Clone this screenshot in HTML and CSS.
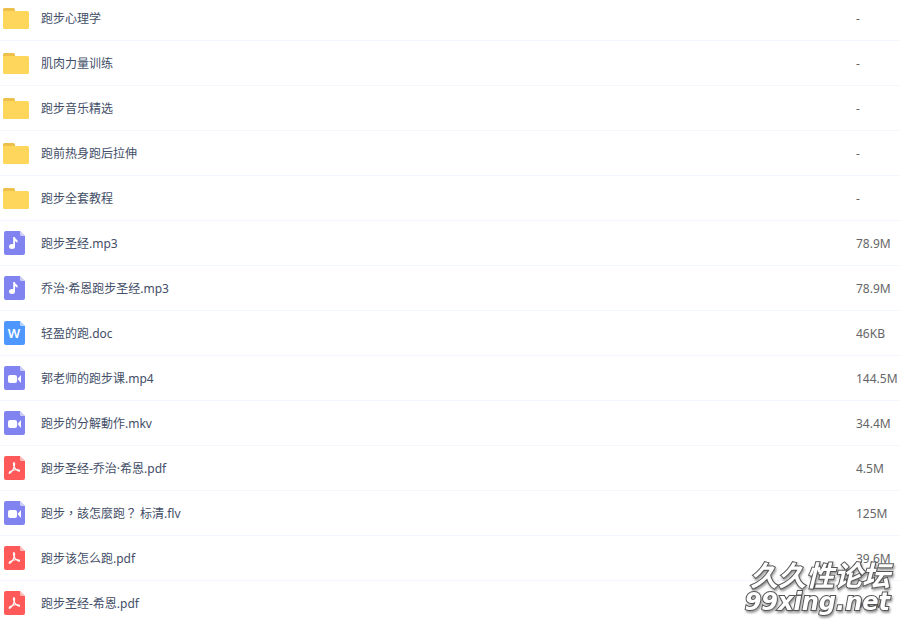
FILE: index.html
```html
<!DOCTYPE html>
<html lang="zh-CN">

<head>
    <meta charset="utf-8">
    <title>跑步</title>
    <link rel="stylesheet" href="styles.css">
</head>

<body>
    <svg class="sprite" aria-hidden="true">
        <symbol id="folder" viewBox="0 0 26 24">
            <path fill="#edbf4b" d="M0 10V3.500Q0 2 1.500 2H10.500Q12 2 12 3.500V10Z" />
            <path fill="#ffd65c" d="M0 5H24.500Q26 5 26 6.500V21.500Q26 23 24.500 23H1.500Q0 23 0 21.500Z" />
        </symbol>
        <symbol id="page" viewBox="0 0 26 24">
            <path fill="currentColor" d="M3 0H17L22 5V22Q22 24 20 24H3Q1 24 1 22V2Q1 0 3 0Z" />
            <path fill="#fff" fill-opacity=".6" d="M17 0L22 5H18.500Q17 5 17 3.500Z" />
        </symbol>
        <symbol id="audio" viewBox="0 0 26 24">
            <use href="#page" />
            <ellipse cx="9" cy="15.500" rx="3" ry="2.500" fill="#fff" />
            <path fill="#fff" d="M10.200 6H11.800Q12 8 14.500 9.200V11.800Q13 11 12 10V16H10.200Z" />
        </symbol>
        <symbol id="video" viewBox="0 0 26 24">
            <use href="#page" />
            <rect x="5" y="9" width="9" height="8" rx="2" fill="#fff" />
            <path fill="#fff" d="M14.500 13L18 9V17Z" />
        </symbol>
        <symbol id="word" viewBox="0 0 26 24">
            <use href="#page" />
            <text class="letter" x="11" y="17" text-anchor="middle">W</text>
        </symbol>
        <symbol id="pdf" viewBox="0 0 26 24">
            <use href="#page" />
            <path fill="none" stroke="#fff" stroke-width="1.100" stroke-linejoin="round" stroke-linecap="round"
                d="M10.500 6.800C12 6.200 11.800 8.500 11.200 10.700C10.200 14 7.500 18 6.300 17.300C5.300 16.300 9 14.200 12.500 13.700C15.500 13.400 17.200 14.500 16.400 15.200C15 15.800 11.800 12.800 11 10.500C10.300 8.500 10 7.500 10.500 6.800" />
        </symbol>
    </svg>

    <table class="file-list">
        <tr>
            <td class="name"><a href="#"><svg class="icon"><use href="#folder" /></svg>跑步心理学</a></td>
            <td class="size">-</td>
        </tr>
        <tr>
            <td class="name"><a href="#"><svg class="icon"><use href="#folder" /></svg>肌肉力量训练</a></td>
            <td class="size">-</td>
        </tr>
        <tr>
            <td class="name"><a href="#"><svg class="icon"><use href="#folder" /></svg>跑步音乐精选</a></td>
            <td class="size">-</td>
        </tr>
        <tr>
            <td class="name"><a href="#"><svg class="icon"><use href="#folder" /></svg>跑前热身跑后拉伸</a></td>
            <td class="size">-</td>
        </tr>
        <tr>
            <td class="name"><a href="#"><svg class="icon"><use href="#folder" /></svg>跑步全套教程</a></td>
            <td class="size">-</td>
        </tr>
        <tr>
            <td class="name"><a href="#"><svg class="icon media"><use href="#audio" /></svg>跑步圣经.mp3</a></td>
            <td class="size">78.9M</td>
        </tr>
        <tr>
            <td class="name"><a href="#"><svg class="icon media"><use href="#audio" /></svg>乔治·希恩跑步圣经.mp3</a></td>
            <td class="size">78.9M</td>
        </tr>
        <tr>
            <td class="name"><a href="#"><svg class="icon doc"><use href="#word" /></svg>轻盈的跑.doc</a></td>
            <td class="size">46KB</td>
        </tr>
        <tr>
            <td class="name"><a href="#"><svg class="icon media"><use href="#video" /></svg>郭老师的跑步课.mp4</a></td>
            <td class="size">144.5M</td>
        </tr>
        <tr>
            <td class="name"><a href="#"><svg class="icon media"><use href="#video" /></svg>跑步的分解動作.mkv</a></td>
            <td class="size">34.4M</td>
        </tr>
        <tr>
            <td class="name"><a href="#"><svg class="icon pdf"><use href="#pdf" /></svg>跑步圣经-乔治·希恩.pdf</a></td>
            <td class="size">4.5M</td>
        </tr>
        <tr>
            <td class="name trad" lang="zh-TW"><a href="#"><svg class="icon media"><use href="#video" /></svg>跑步，該怎麼跑？ 标清.flv</a></td>
            <td class="size">125M</td>
        </tr>
        <tr>
            <td class="name"><a href="#"><svg class="icon pdf"><use href="#pdf" /></svg>跑步该怎么跑.pdf</a></td>
            <td class="size">39.6M</td>
        </tr>
        <tr>
            <td class="name"><a href="#"><svg class="icon pdf"><use href="#pdf" /></svg>跑步圣经-希恩.pdf</a></td>
            <td class="size">5.2M</td>
        </tr>
    </table>

    <div class="watermark">
        <span class="cn">久久性论坛</span>
        <span class="en">99xing.net</span>
    </div>
</body>

</html>
```
FILE: styles.css
```css
html {
    overflow: hidden;
}

body {
    margin: 0;
    background: #fff;
    font-family: "Noto Sans", "Noto Sans CJK SC", sans-serif;
    font-size: 12px;
    line-height: 20px;
    color: #424e67;
}

.sprite {
    position: absolute;
    width: 0;
    height: 0;
}

/* 列表向上滚动了一点，首行被裁掉 4px */
.file-list {
    width: 100%;
    margin-top: -4px;
    border-collapse: collapse;
    table-layout: fixed;
}

.file-list td {
    height: 42px;
    padding: 2px 0 0;
    border-bottom: 1px solid #f2f6fd;
    white-space: nowrap;
}

.name a {
    display: flex;
    align-items: center;
    gap: 12px;
    padding-left: 3px;
    color: #424e67;
    text-decoration: none;
}

.name a:hover {
    color: #09aaff;
}

.trad {
    font-family: "Noto Sans", "Noto Sans CJK TC", sans-serif;
}

.file-list .size {
    width: 44px;
    color: #666;
}

.icon {
    flex: none;
    width: 26px;
    height: 24px;
    margin-bottom: 2px;
}

.letter {
    font-size: 13px;
    font-weight: 600;
    fill: #fff;
}

.media {
    color: #8183f1;
}

.doc {
    color: #4e97ff;
}

.pdf {
    color: #ff5959;
}

/* 水印 */
.watermark {
    position: fixed;
    right: 10px;
    bottom: 8px;
    display: flex;
    flex-direction: column;
    align-items: flex-end;
    font-style: italic;
    font-weight: bold;
    color: #fff;
    -webkit-text-stroke: 2px #555;
    paint-order: stroke fill;
    filter: drop-shadow(1px 2px 1px rgba(0, 0, 0, 0.4));
    pointer-events: none;
}

.watermark .cn {
    font-size: 28px;
    line-height: 30px;
}

.watermark .en {
    font-family: "DejaVu Sans", sans-serif;
    font-size: 24px;
    line-height: 24px;
}
```
